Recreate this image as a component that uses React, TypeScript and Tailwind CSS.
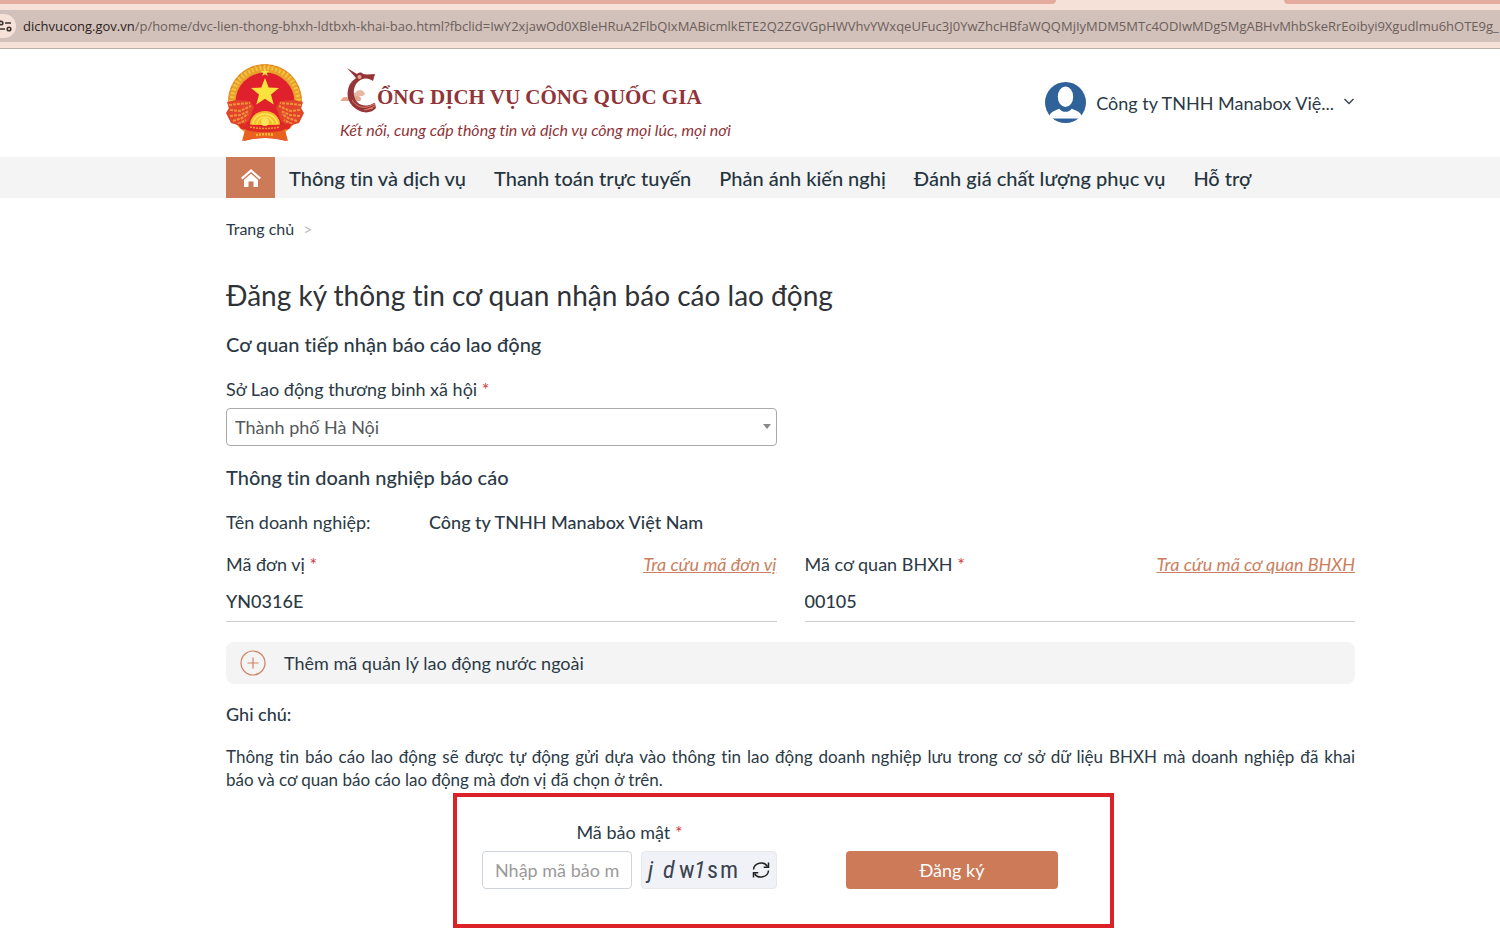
import type { ReactNode } from "react";

const NAV_ITEMS = [
  "Thông tin và dịch vụ",
  "Thanh toán trực tuyến",
  "Phản ánh kiến nghị",
  "Đánh giá chất lượng phục vụ",
  "Hỗ trợ",
];

const URL_HOST = "dichvucong.gov.vn";
const URL_PATH =
  "/p/home/dvc-lien-thong-bhxh-ldtbxh-khai-bao.html?fbclid=IwY2xjawOd0XBleHRuA2FlbQIxMABicmlkETE2Q2ZGVGpHWVhvYWxqeUFuc3J0YwZhcHBfaWQQMjIyMDM5MTc4ODIwMDg5MgABHvMhbSkeRrEoibyi9Xgudlmu6hOTE9g_";

function BrowserBar() {
  return (
    <div className="border-b border-[#b9aeaa] bg-[#f6e1d8]">
      <div className="flex h-1">
        <div className="w-[1056px] shrink-0 rounded-br-[4px] bg-[#e4ab9e]" />
        <div className="w-[228px] shrink-0" />
        <div className="grow rounded-bl-[4px] bg-[#e4ab9e]" />
      </div>
      <div className="mt-[6px] mb-[6px] flex h-8 items-center overflow-hidden bg-[#d2c0ba]">
        <div className="flex h-6 w-4 shrink-0 items-center justify-end rounded-r-full bg-[#f6e1d8] pr-1">
          <svg width="12" height="12" viewBox="0 0 12 12" fill="none" stroke="#3b322f" strokeWidth="1.6">
            <circle cx="1" cy="3" r="1.8" />
            <path d="M5 3h6M0 9h5" />
            <circle cx="9" cy="9" r="1.8" />
          </svg>
        </div>
        <p className="ml-[7px] pt-[2px] font-['Open_Sans',sans-serif] text-[13px] whitespace-nowrap text-[#6b5f5b]">
          <span className="text-[#2b2321]">{URL_HOST}</span>
          {URL_PATH}
        </p>
      </div>
    </div>
  );
}

function Emblem() {
  return (
    <svg width="78" height="78" viewBox="0 0 78 78" role="img" aria-label="Quốc huy">
      <circle cx="39" cy="37" r="37" fill="#e8a02c" />
      <circle cx="39" cy="37" r="33.5" fill="none" stroke="#f3c13c" strokeWidth="5" strokeDasharray="2 2" />
      <circle cx="39" cy="37" r="36" fill="none" stroke="#e07a22" strokeWidth="1" strokeDasharray="3 2" />
      <circle cx="39" cy="38" r="29.5" fill="#e0202c" />
      <path d="M1 38l9-2 14 1 4 6-5 14-8 5-10-3-5-10 3-5z" fill="#e2442c" />
      <path d="M77 38l-9-2-14 1-4 6 5 14 8 5 10-3 5-10-3-5z" fill="#e2442c" />
      <g fill="none" stroke="#f0943a" strokeWidth="2" strokeDasharray="3 1">
        <path d="M3 41l9-1 12-1M4 46l10 1 11-5M4 52l10-1 9-4M7 57l9-3 6-4M12 60l8-4" />
        <path d="M75 41l-9-1-12-1M74 46l-10 1-11-5M74 52l-10-1-9-4M71 57l-9-3-6-4M66 60l-8-4" />
      </g>
      <path d="M39 4l1.2 3h3l-2.4 2 1 3-2.8-1.8L36.2 12l1-3-2.4-2h3z" fill="#fbe04a" />
      <path d="M39 14l3.7 9.6 10.3.4-8 6.5 2.7 10L39 34.8 30.3 40.5l2.7-10-8-6.5 10.3-.4z" fill="#fbe23c" />
      <path d="M24 61a15 14 0 0 1 30 0z" fill="#f4bf2a" />
      <g fill="none" stroke="#fbe45a" strokeWidth="1.5">
        <path d="M27 60a12 10 0 0 1 24 0M31 60a8 7 0 0 1 16 0" />
      </g>
      <circle cx="39" cy="58" r="4" fill="#fbe45a" />
      <path d="M12 60c8-1 16 2 27 2s19-3 27-2l-3 5-6 1 3 11c-7-2-14-3-21-3s-14 1-21 3l3-11-6-1z" fill="#de2a26" />
      <path d="M19 66c12 3 28 3 40 0l3 11c-15-4-31-4-46 0z" fill="#e9611f" />
      <path d="M24 63c10 2 20 2 30 0" fill="none" stroke="#f29a35" strokeWidth="1.5" strokeDasharray="2 1" />
      <path d="M30 71c6-1 12-1 18 0" fill="none" stroke="#f8b83a" strokeWidth="2.5" strokeDasharray="2 1" />
    </svg>
  );
}

/* Bird shaped letter C that opens the portal name */
function BirdC() {
  return (
    <svg width="37" height="46" viewBox="0 0 37 46" aria-hidden="true">
      <path d="M1 33c2-4 6-3 8-2 2-5 7-7 9-2 3 0 4 4 2 5H3c-2 0-3 0-2-1z" fill="#e3a68f" />
      <path d="M15 26c3-4 8-4 10 1l-2 2h-9z" fill="#e9b8a4" />
      <path
        d="M7 1l10 6c2-2 5-2 6 0 4 1 8 0 12 0l-2 7c-3-2-6-3-10-2-7 2-10 9-9 16 1 8 8 12 15 10 2 0 4-2 6-2l1 5c-3 4-10 6-16 3C11 40 6 32 8 23c1-6 4-9 8-12z"
        fill="#94353a"
      />
      <circle cx="19.5" cy="10" r="2" fill="#e8a68c" />
      <path d="M12 33c4 6 9 8 15 7M27 40l8-3M28 42l7-3M24 43l9-2" fill="none" stroke="#dd8468" strokeWidth="1" />
    </svg>
  );
}

function Header() {
  return (
    <header className="flex items-start justify-between pt-[15px] pr-[145px] pb-[15px] pl-[226px]">
      <div className="flex">
        <Emblem />
        <div className="ml-9 text-[#8f3438]">
          <div className="flex items-start pt-[3px]">
            <BirdC />
            <p className="pt-[14px] font-['Liberation_Serif',serif] text-[21px] leading-8 font-bold whitespace-nowrap">
              ỔNG DỊCH VỤ CÔNG QUỐC GIA
            </p>
          </div>
          <p className="mt-[6px] text-[16px] leading-[22px] whitespace-nowrap italic">
            Kết nối, cung cấp thông tin và dịch vụ công mọi lúc, mọi nơi
          </p>
        </div>
      </div>
      <button type="button" className="mt-[18px] flex items-center text-[18px] leading-6">
        <svg width="41" height="41" viewBox="0 0 40 40" aria-hidden="true">
          <circle cx="20" cy="20" r="20" fill="#2f6299" />
          <ellipse cx="20" cy="14.5" rx="7.5" ry="10" fill="#fff" />
          <path d="M4 34c1-5 5-6 10-8 2 4 10 4 12 0 5 2 9 3 10 8z" fill="#fff" />
          <path d="M4 33.5h32l-2 2H6z" fill="#fff" />
        </svg>
        <span className="ml-[10px]">Công ty TNHH Manabox Việ...</span>
        <svg className="ml-[9px]" width="12" height="12" viewBox="0 0 12 12" fill="none" stroke="#3c4650" strokeWidth="1.5">
          <path d="M1.5 2l4.5 4.5L10.5 2" />
        </svg>
      </button>
    </header>
  );
}

function NavBar() {
  return (
    <nav className="flex items-center bg-[#f4f4f4] pl-[226px] text-[20px] leading-6 font-medium text-[#25343f]">
      <a href="#home" aria-label="Trang chủ" className="flex h-[41px] w-[49px] shrink-0 items-center justify-center bg-[#cc7a58]">
        <svg width="22" height="20" viewBox="0 0 22 20" fill="#fff">
          <path d="M11 1L1 9.8l1.400 1.600L11 4l8.600 7.400L21 9.800z" />
          <path d="M4 11.8L11 5.800l7 6V19h-4.500v-5.500h-5V19H4z" />
        </svg>
      </a>
      <div className="flex gap-7 pl-[14px] whitespace-nowrap">
        {NAV_ITEMS.map((item) => (
          <a key={item} href="#nav">
            {item}
          </a>
        ))}
      </div>
    </nav>
  );
}

function Required() {
  return <span className="text-[#d0393e]">*</span>;
}

interface CodeFieldProps {
  id: string;
  label: string;
  value: string;
  lookup: string;
}

function CodeField({ id, label, value, lookup }: CodeFieldProps) {
  return (
    <div>
      <div className="flex justify-between">
        <label htmlFor={id}>
          {label} <Required />
        </label>
        <a href="#lookup" className="text-[#cc7f60] italic underline">
          {lookup}
        </a>
      </div>
      <input
        id={id}
        defaultValue={value}
        className="mt-[5px] block h-[41px] w-full border-b border-[#cdcdcd] font-medium outline-none"
      />
    </div>
  );
}

function SectionTitle({ children }: { children: ReactNode }) {
  return <h2 className="text-[20px] leading-6 font-medium">{children}</h2>;
}

function CaptchaBox() {
  return (
    <div className="flex h-[38px] w-[136px] items-center justify-between rounded-[4px] border border-[#e6e8ec] bg-[#f1f2f7] px-[6px]">
      <div className="flex items-center font-['Roboto_Condensed','Liberation_Sans',sans-serif] text-[24px] leading-8 text-[#3a4350]">
        <span className="w-[15px] italic">j</span>
        <span className="w-4 italic">d</span>
        <span className="w-[15px]">w</span>
        <span className="w-[13px] italic">1</span>
        <span className="w-[13px]">s</span>
        <span className="w-[18px]">m</span>
      </div>
      <button type="button" aria-label="Đổi mã bảo mật">
        <svg width="18" height="18" viewBox="0 0 18 18" fill="none" stroke="#222" strokeWidth="1.5">
          <path d="M1.5 8.5A7.5 7 0 0 1 15.5 5.5M16.5 9.5A7.5 7 0 0 1 2.5 12.5" />
          <path d="M16.5 1.5v4.800h-4.800M1.500 16.500v-4.800h4.800" />
        </svg>
      </button>
    </div>
  );
}

export default function App() {
  return (
    <div className="bg-white font-['Lato','Noto_Sans',sans-serif] text-[#2b3a46] [font-variant-ligatures:none]">
      <BrowserBar />
      <Header />
      <NavBar />
      <main className="pr-[145px] pl-[226px] text-[18px] leading-6">
        <div className="pt-[19px] text-[16px]">
          <a href="#home">Trang chủ</a>
          <span className="ml-[9px] text-[#bcbcbc]">&gt;</span>
        </div>
        <h1 className="mt-9 text-[28px] leading-9 text-[#2f3337]">
          Đăng ký thông tin cơ quan nhận báo cáo lao động
        </h1>

        <form>
          <div className="mt-[19px]">
            <SectionTitle>Cơ quan tiếp nhận báo cáo lao động</SectionTitle>
          </div>
          <div className="mt-[21px] grid grid-cols-2 gap-x-7">
            <div>
              <label htmlFor="department">
                Sở Lao động thương binh xã hội <Required />
              </label>
              <div className="relative mt-[7px]">
                <select
                  id="department"
                  className="h-[38px] w-full appearance-none rounded-[4px] border border-[#aaa] bg-white px-2 text-[#55585c] outline-none"
                >
                  <option>Thành phố Hà Nội</option>
                </select>
                <svg className="pointer-events-none absolute top-4 right-[6px]" width="8" height="5" viewBox="0 0 8 5" fill="#888">
                  <path d="M0 0h8L4 5z" />
                </svg>
              </div>
            </div>
          </div>

          <div className="mt-[19px]">
            <SectionTitle>Thông tin doanh nghiệp báo cáo</SectionTitle>
          </div>
          <div className="mt-[21px] flex">
            <span className="w-[203px]">Tên doanh nghiệp:</span>
            <span className="font-medium">Công ty TNHH Manabox Việt Nam</span>
          </div>
          <div className="mt-[18px] grid grid-cols-2 gap-x-7">
            <CodeField id="unit-code" label="Mã đơn vị" value="YN0316E" lookup="Tra cứu mã đơn vị" />
            <CodeField id="agency-code" label="Mã cơ quan BHXH" value="00105" lookup="Tra cứu mã cơ quan BHXH" />
          </div>

          <button type="button" className="mt-5 flex h-[42px] w-full items-center rounded-lg bg-[#f4f4f4] pl-[14px]">
            <svg width="26" height="26" viewBox="0 0 26 26" fill="none" stroke="#d08163" strokeWidth="1.2">
              <circle cx="13" cy="13" r="12" />
              <path d="M13 7.5v11M7.5 13h11" />
            </svg>
            <span className="ml-[18px]">Thêm mã quản lý lao động nước ngoài</span>
          </button>

          <p className="mt-[18px] font-medium">Ghi chú:</p>
          <p className="mt-[19px] text-justify text-[17px] leading-[23px]">
            Thông tin báo cáo lao động sẽ được tự động gửi dựa vào thông tin lao động doanh nghiệp lưu trong cơ sở dữ
            liệu BHXH mà doanh nghiệp đã khai báo&nbsp;và&nbsp;cơ&nbsp;quan báo cáo lao động mà đơn vị đã chọn ở trên.
          </p>

          <div className="mt-[2px] mr-[241px] ml-[227px] flex items-end justify-between border-4 border-[#dc2128] pt-[23px] pr-[52px] pb-[35px] pl-[25px]">
            <div>
              <label htmlFor="captcha" className="block text-center">
                Mã bảo mật <Required />
              </label>
              <div className="mt-[7px] flex gap-[9px]">
                <input
                  id="captcha"
                  placeholder="Nhập mã bảo mật"
                  className="h-[38px] w-[150px] rounded-[4px] border border-[#ced4da] px-3 outline-none placeholder:text-[#9a9a9a]"
                />
                <CaptchaBox />
              </div>
            </div>
            <button type="submit" className="h-[38px] w-[212px] rounded-[4px] bg-[#cc7a58] text-white">
              Đăng ký
            </button>
          </div>
        </form>
      </main>
    </div>
  );
}
